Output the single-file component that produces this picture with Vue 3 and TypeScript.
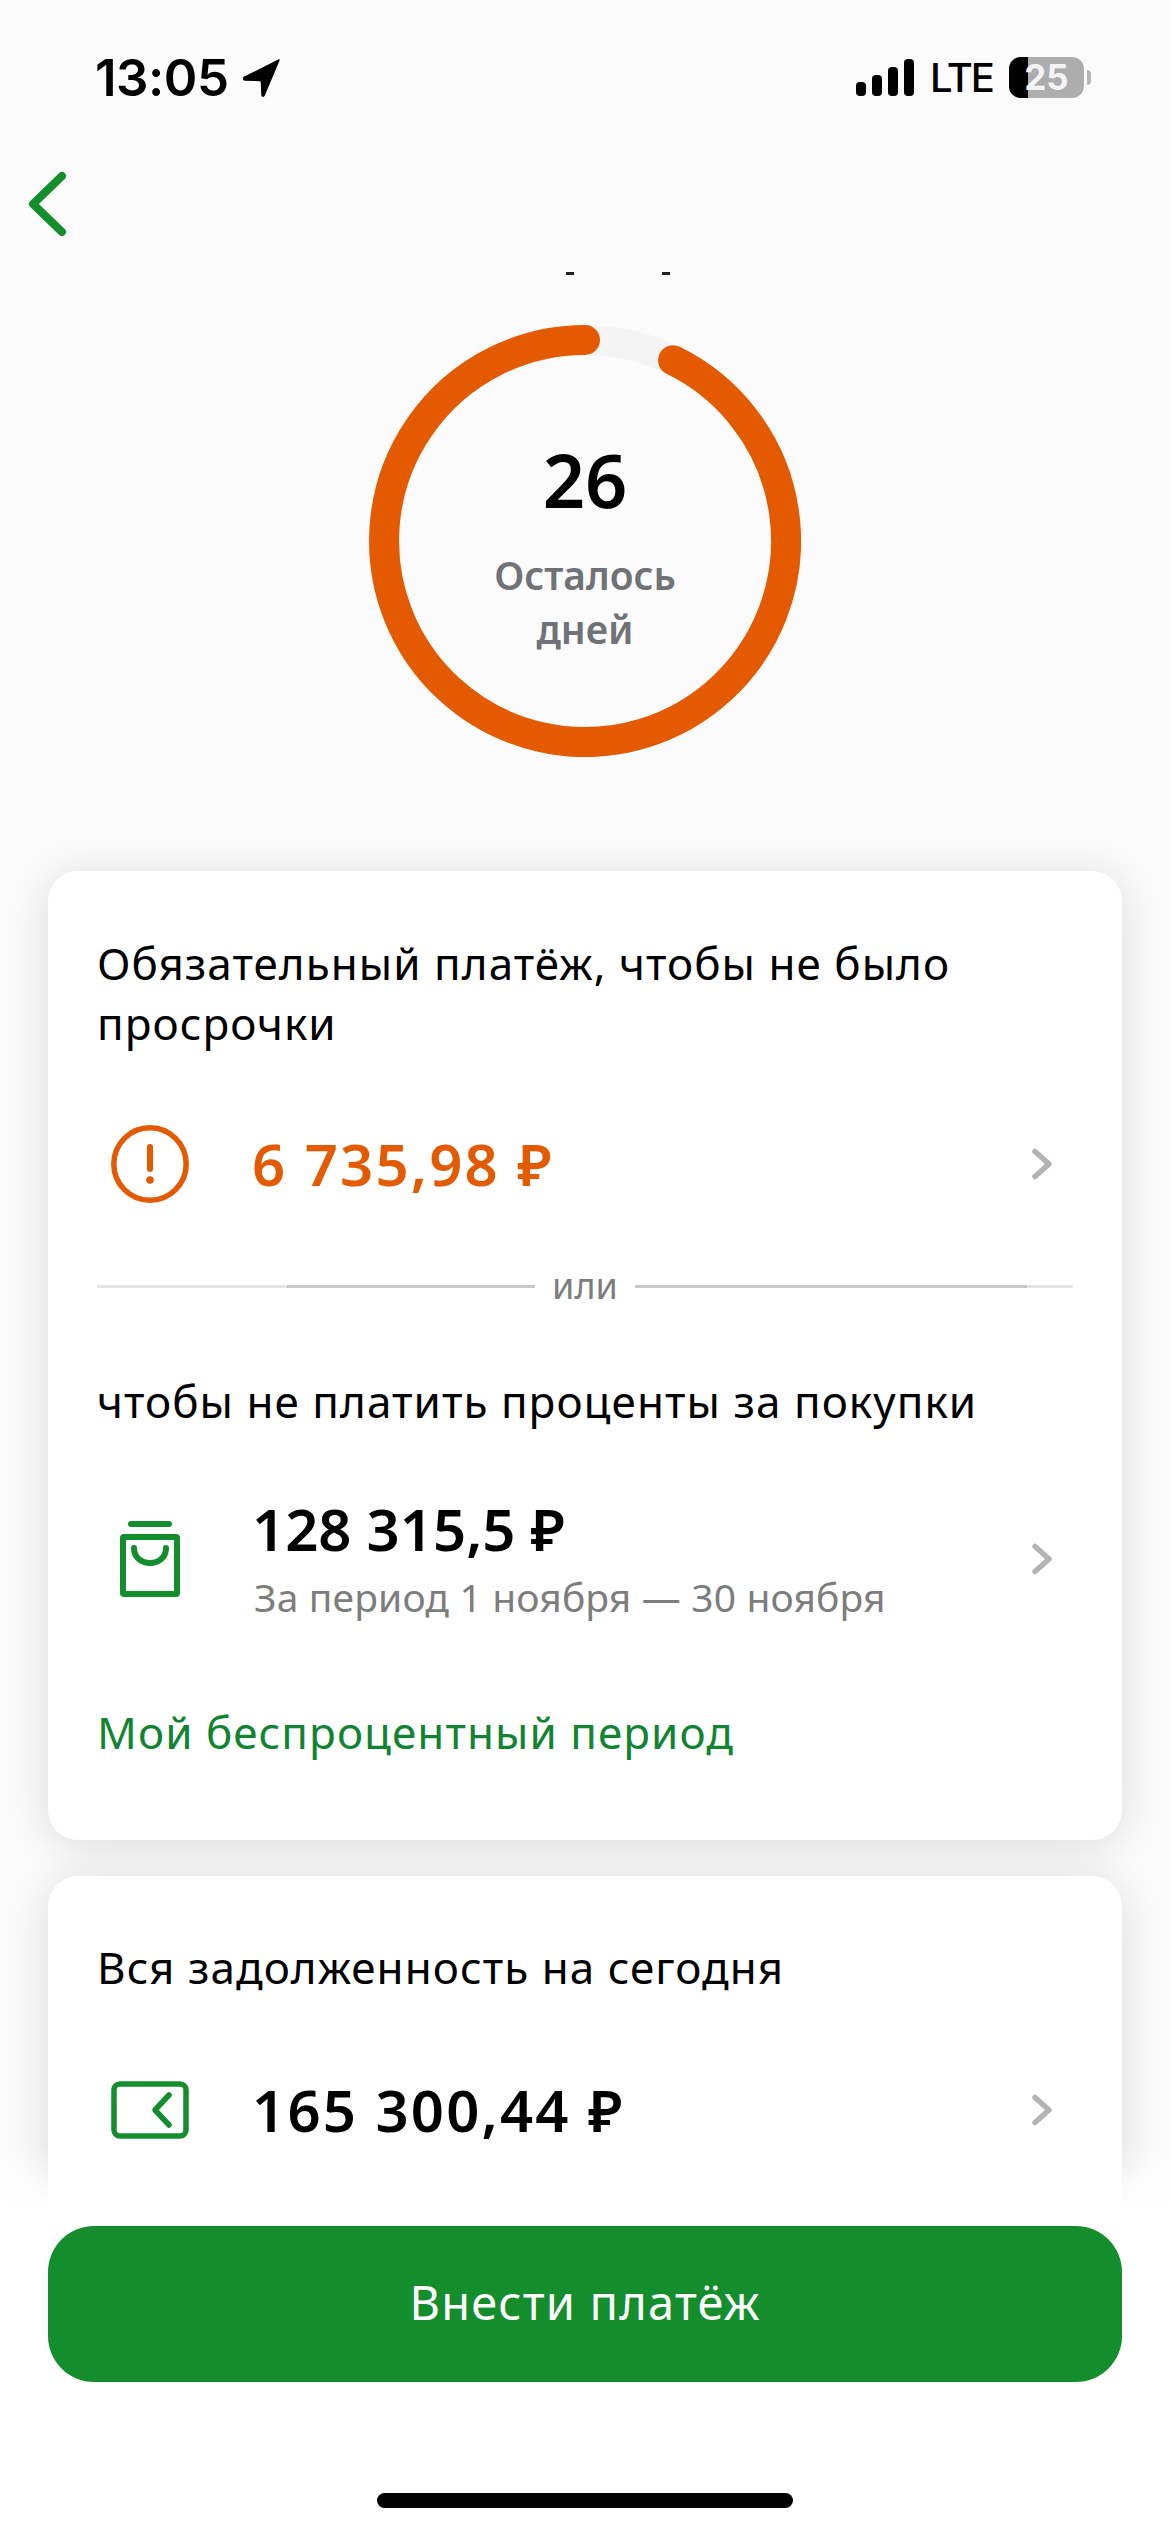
<script setup lang="ts">
// static screen, no state needed
</script>

<template>
  <div class="screen">
    <!-- status bar -->
    <div class="statusBar">
      <div class="statusLeft">
        <span class="time">13:05</span>
        <svg class="locIcon" width="38" height="40" viewBox="0 0 38 40">
          <path d="M36 2 L1 19.500 Q0 21.500 2 22 L17 22.500 Q18.500 22.700 18.500 24 L19 37 Q19.500 39 21 37.500 Z" fill="#000" stroke="#000" stroke-width="1.500" stroke-linejoin="round" />
        </svg>
      </div>
      <div class="statusRight">
        <div class="signal">
          <i style="height: 14px"></i>
          <i style="height: 21px"></i>
          <i style="height: 29px"></i>
          <i style="height: 37px"></i>
        </div>
        <span class="lte">LTE</span>
        <div class="battery">
          <div class="batteryBody">
            <div class="batteryFill"></div>
            <span class="batteryText">25</span>
          </div>
          <div class="batteryNub"></div>
        </div>
      </div>
    </div>

    <!-- nav -->
    <div class="nav">
      <svg width="50" height="70" viewBox="0 0 50 70">
        <path d="M42 7 L13 35 L42 63" fill="none" stroke="#148d2d" stroke-width="8" stroke-linecap="round" stroke-linejoin="round" />
      </svg>
    </div>

    <div class="titleStub"><i></i><i></i></div>

    <!-- ring -->
    <div class="ringWrap">
      <svg class="ring" width="432" height="432" viewBox="0 0 432 432">
        <circle cx="216" cy="216" r="201" fill="none" stroke="#f4f4f4" stroke-width="30" />
        <path d="M304.100 35.300 A201 201 0 1 1 216 15" fill="none" stroke="#e35a00" stroke-width="30" stroke-linecap="round" />
      </svg>
      <div class="ringText">
        <div class="days">26</div>
        <div class="daysLabel">Осталось<br />дней</div>
      </div>
    </div>

    <!-- payment card -->
    <div class="card cardMain">
      <div class="cardTitle">Обязательный платёж, чтобы не было просрочки</div>
      <div class="row rowAlert">
        <div class="rowIcon">
          <svg width="78" height="78" viewBox="0 0 78 78">
            <circle cx="39" cy="39" r="36.200" fill="none" stroke="#e35a00" stroke-width="5.500" />
            <path d="M39 22 V44" stroke="#e35a00" stroke-width="6" stroke-linecap="round" />
            <circle cx="39" cy="55" r="3.800" fill="#e35a00" />
          </svg>
        </div>
        <div class="amount amountOrange wide">6 735,98 ₽</div>
        <svg class="chev" width="24" height="32" viewBox="0 0 24 32">
          <path d="M4 3.500 L18 16 L4 28.500" fill="none" stroke="#b3b3b3" stroke-width="5.500" stroke-linecap="round" stroke-linejoin="round" />
        </svg>
      </div>

      <div class="orRow">
        <span class="orLine orLeft"></span>
        <span class="orText">или</span>
        <span class="orLine orRight"></span>
      </div>

      <div class="cardTitle second">чтобы не платить проценты за покупки</div>
      <div class="row rowBag">
        <div class="rowIcon">
          <svg width="60" height="76" viewBox="0 0 60 76">
            <path d="M11 3 H49" stroke="#148d2d" stroke-width="6" stroke-linecap="round" />
            <rect x="3" y="16" width="54" height="57" rx="1" fill="none" stroke="#148d2d" stroke-width="6" stroke-linejoin="round" />
            <path d="M14 27 C14 47 46 47 46 27" fill="none" stroke="#148d2d" stroke-width="6" stroke-linecap="round" />
          </svg>
        </div>
        <div class="amountCol">
          <div class="amount">128 315,5 ₽</div>
          <div class="period">За период 1 ноября — 30 ноября</div>
        </div>
        <svg class="chev" width="24" height="32" viewBox="0 0 24 32">
          <path d="M4 3.500 L18 16 L4 28.500" fill="none" stroke="#b3b3b3" stroke-width="5.500" stroke-linecap="round" stroke-linejoin="round" />
        </svg>
      </div>
      <div class="link">Мой беспроцентный период</div>
    </div>

    <!-- debt card -->
    <div class="card cardDebt">
      <div class="cardTitle">Вся задолженность на сегодня</div>
      <div class="row rowDebt">
        <div class="rowIcon">
          <svg width="78" height="58" viewBox="0 0 78 58">
            <rect x="3" y="3" width="72" height="52" rx="6" fill="none" stroke="#148d2d" stroke-width="5.500" />
            <path d="M58 14 L44 29 L58 44" fill="none" stroke="#148d2d" stroke-width="5.500" stroke-linecap="round" stroke-linejoin="round" />
          </svg>
        </div>
        <div class="amount wide">165 300,44 ₽</div>
        <svg class="chev" width="24" height="32" viewBox="0 0 24 32">
          <path d="M4 3.500 L18 16 L4 28.500" fill="none" stroke="#b3b3b3" stroke-width="5.500" stroke-linecap="round" stroke-linejoin="round" />
        </svg>
      </div>
    </div>

    <!-- fixed bottom -->
    <div class="footer">
      <div class="payBtn">Внести платёж</div>
      <div class="homeBar"></div>
    </div>
  </div>
</template>

<style>
html,
body {
  margin: 0;
  background: #fff;
}
</style>

<style scoped>
.screen {
  position: relative;
  width: 1170px;
  height: 2532px;
  overflow: hidden;
  background: #fbfbfb;
  font-family: "Noto Sans", "Open Sans", sans-serif;
  color: #000;
}

/* ---- Status bar ---- */
.statusBar {
  height: 155px;
  display: flex;
  align-items: center;
  justify-content: space-between;
  padding: 0 79px 0 95px;
  box-sizing: border-box;
}

.statusLeft {
  display: flex;
  align-items: center;
  gap: 14px;
}

.time {
  font-family: Inter, sans-serif;
  font-size: 51px;
  font-weight: 600;
  line-height: 60px;
  letter-spacing: -0.5px;
}

.statusRight {
  display: flex;
  align-items: center;
}

.signal {
  display: flex;
  align-items: flex-end;
  gap: 6px;
  height: 37px;
}

.signal i {
  display: block;
  width: 10px;
  background: #000;
  border-radius: 4px;
}

.lte {
  margin-left: 16px;
  font-family: Inter, sans-serif;
  font-size: 40px;
  font-weight: 500;
  line-height: 40px;
  letter-spacing: -2px;
}

.battery {
  margin-left: 16px;
  display: flex;
  align-items: center;
  gap: 3px;
}

.batteryBody {
  position: relative;
  width: 75px;
  height: 41px;
  border-radius: 12px;
  background: #adadad;
  overflow: hidden;
  text-align: center;
}

.batteryFill {
  position: absolute;
  left: 0;
  top: 0;
  bottom: 0;
  width: 19px;
  background: #000;
}

.batteryText {
  position: relative;
  font-family: Inter, sans-serif;
  font-size: 35px;
  font-weight: 700;
  line-height: 41px;
  color: #f4f4f4;
}

.batteryNub {
  width: 4px;
  height: 15px;
  background: #b5b5b5;
  border-radius: 0 4px 4px 0;
}

/* ---- Nav ---- */
.nav {
  height: 98px;
  display: flex;
  align-items: center;
  padding-left: 20px;
}

.titleStub {
  margin-top: 19px;
  padding-left: 66px;
  height: 4px;
  display: flex;
  justify-content: center;
  gap: 88px;
}

.titleStub i {
  display: block;
  width: 8px;
  height: 3px;
  background: #222;
}

/* ---- Ring ---- */
.ringWrap {
  margin: 49px auto 0;
  width: 432px;
  height: 432px;
  display: grid;
}

.ring,
.ringText {
  grid-area: 1 / 1;
}

.ringText {
  display: flex;
  flex-direction: column;
  align-items: center;
  padding-top: 110px;
}

.days {
  font-size: 74px;
  font-weight: 600;
  line-height: 90px;
}

.daysLabel {
  margin-top: 23px;
  font-size: 39px;
  font-weight: 600;
  line-height: 54px;
  color: #6f7276;
  text-align: center;
}

/* ---- Cards ---- */
.card {
  margin: 0 48px;
  background: #fff;
  border-radius: 30px;
  box-shadow: 0 4px 44px rgba(0, 0, 0, 0.13);
  padding: 0 49px;
}

.cardMain {
  margin-top: 114px;
  height: 969px;
  box-sizing: border-box;
  padding-top: 62px;
}

.cardDebt {
  margin-top: 36px;
  height: 420px;
  box-sizing: border-box;
  padding-top: 61px;
}

.cardTitle {
  font-size: 44px;
  line-height: 60px;
  letter-spacing: 1.050px;
}

.cardTitle.second {
  margin-top: 63px;
}

.row {
  display: flex;
  align-items: center;
  margin-left: -34px;
}

.rowIcon {
  width: 191px;
  flex: none;
  display: flex;
  justify-content: center;
  box-sizing: border-box;
  padding: 0 65px 0 48px;
}

.rowAlert {
  height: 78px;
  margin-top: 72px;
}

.rowBag {
  margin-top: 62px;
  height: 131px;
}

.rowDebt {
  margin-top: 83px;
  height: 60px;
}

.amountCol {
  flex: 1;
}

.amount {
  flex: 1;
  margin-left: -2px;
  font-size: 58px;
  font-weight: 600;
  line-height: 70px;
}

.amount.wide {
  letter-spacing: 2.200px;
}

.amountOrange {
  color: #e35a00;
}

.period {
  margin-top: 7px;
  font-size: 39px;
  line-height: 52px;
  letter-spacing: 0.150px;
  color: #7d7d7d;
}

.chev {
  flex: none;
  margin-right: 18px;
}

.orRow {
  margin-top: 61px;
  height: 44px;
  display: flex;
  align-items: center;
  gap: 17px;
}

.orLine {
  flex: 1;
  height: 3px;
}

.orLeft {
  background: linear-gradient(to right, #e4e4e4 190px, #c8c8c8 190px);
}

.orRight {
  background: linear-gradient(to left, #e4e4e4 46px, #c8c8c8 46px);
}

.orText {
  font-size: 36px;
  line-height: 44px;
  color: #7d7d7d;
}

.link {
  margin-top: 78px;
  font-size: 44px;
  line-height: 60px;
  letter-spacing: 1.050px;
  color: #118432;
}

/* ---- Footer ---- */
.footer {
  position: absolute;
  left: 0;
  right: 0;
  bottom: 0;
  height: 387px;
  box-sizing: border-box;
  padding: 81px 48px 0;
  background: linear-gradient(to bottom, rgba(255, 255, 255, 0), #fff 60px);
}

.payBtn {
  height: 156px;
  border-radius: 46px;
  background: #148d2d;
  color: #fff;
  font-size: 47px;
  letter-spacing: 1.200px;
  line-height: 152px;
  text-align: center;
}

.homeBar {
  width: 416px;
  height: 15px;
  margin: 111px auto 0;
  border-radius: 8px;
  background: #000;
}
</style>
